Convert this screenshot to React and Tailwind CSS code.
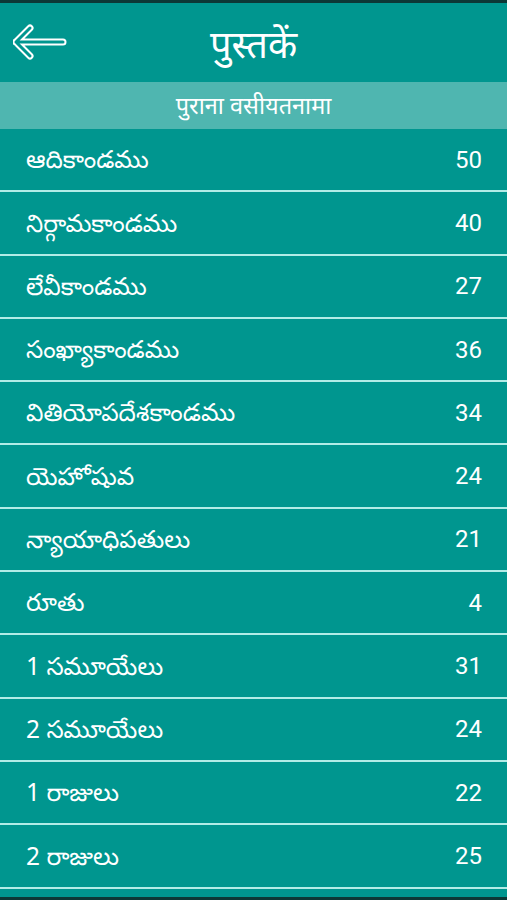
import React from "react";

const books = [
  { name: "ఆదికాండము", chapters: 50 },
  { name: "నిర్గామకాండము", chapters: 40 },
  { name: "లేవీకాండము", chapters: 27 },
  { name: "సంఖ్యాకాండము", chapters: 36 },
  { name: "వితియోపదేశకాండము", chapters: 34 },
  { name: "యెహోషువ", chapters: 24 },
  { name: "న్యాయాధిపతులు", chapters: 21 },
  { name: "రూతు", chapters: 4 },
  { name: "1 సమూయేలు", chapters: 31 },
  { name: "2 సమూయేలు", chapters: 24 },
  { name: "1 రాజులు", chapters: 22 },
  { name: "2 రాజులు", chapters: 25 },
];

const BackArrow = () => (
  <svg width="54" height="36" viewBox="0 0 54 36" fill="none">
    <path
      d="M17 4 L3 18 L17 32 M3 18 L50 18"
      stroke="white"
      strokeWidth="7"
      strokeLinecap="round"
      strokeLinejoin="round"
    />
    <path
      d="M17 4 L3 18 L17 32 M3 18 L50 18"
      stroke="#00968f"
      strokeWidth="3"
      strokeLinecap="round"
      strokeLinejoin="round"
    />
  </svg>
);

const App = () => {
  return (
    <div
      className="w-[507px] h-[900px] overflow-hidden bg-[#00968f] flex flex-col"
      style={{ fontFamily: '"Noto Sans", "Noto Sans Telugu", "Noto Sans Devanagari", Roboto, sans-serif' }}
    >
      <div className="h-[3px] bg-[#0c3836]" />
      <div className="h-[79px] relative flex items-center justify-center">
        <button className="absolute left-[13px] top-[21px]">
          <BackArrow />
        </button>
        <h1 className="text-[38px] text-white leading-none">पुस्तकें</h1>
      </div>
      <div className="h-[47px] bg-[#4fb6b0] flex items-center justify-center text-white text-[23.5px]">
        पुराना वसीयतनामा
      </div>
      <ul className="flex flex-col">
        {books.map((b) => (
          <li
            key={b.name}
            className="h-[63.3px] flex items-center justify-between pl-[26px] pr-[25px] border-b-2 border-[#b2ece7] text-white text-[24.5px]"
          >
            <span>{b.name}</span>
            <span className="text-[24px]" style={{ fontFamily: "Roboto, sans-serif" }}>{b.chapters}</span>
          </li>
        ))}
      </ul>
      <div className="flex-1" />
      <div className="h-[3px] bg-[#0c3836]" />
    </div>
  );
};

export default App;
